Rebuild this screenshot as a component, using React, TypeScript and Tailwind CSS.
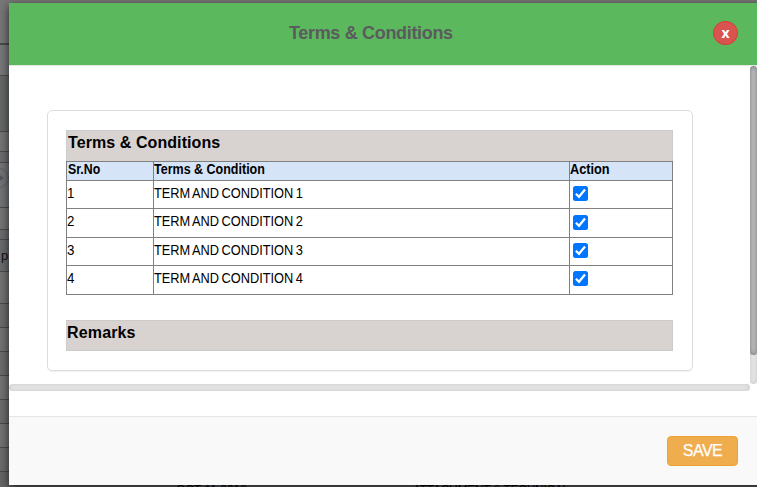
const terms = [
  { id: 1, label: 'TERM AND CONDITION 1', row: 'h-[28px]', check: 'pt-[5px]' },
  { id: 2, label: 'TERM AND CONDITION 2', row: 'h-[29px]', check: 'pt-[6px]' },
  { id: 3, label: 'TERM AND CONDITION 3', row: 'h-[28px]', check: 'pt-[5px]' },
  { id: 4, label: 'TERM AND CONDITION 4', row: 'h-[29px]', check: 'pt-[5px]' },
];

const pageRows = [
  'h-[45px] bg-[#777] border-b-2',
  'h-[31px] bg-[#77787a] border-b',
  'h-[56px] bg-[#666768] border-b',
  'h-[20px] bg-[#747474] border-b',
  'h-[11px] bg-[#6b6b6d] border-b',
  'h-[45px] bg-[#727375] border-b',
  'h-[22px] bg-[#747474] border-b',
  'h-[10px] bg-[#6a6b6d] border-b',
  'h-[32px] bg-[#696a6c] border-b',
  'h-[32px] bg-[#727272] border-b',
  'h-[24px] bg-[#6b6b6b] border-b',
  'h-[24px] bg-[#727272] border-b',
  'h-[24px] bg-[#6b6b6b] border-b',
  'h-[24px] bg-[#727272] border-b',
  'h-[24px] bg-[#6b6b6b] border-b',
  'h-[24px] bg-[#727272] border-b',
  'h-[24px] bg-[#6b6b6b] border-b',
];

function Check() {
  return (
    <span className="relative block size-[15px]">
      <input
        type="checkbox"
        defaultChecked
        className="block size-[15px] appearance-none rounded-[2.5px] bg-[#0075ff]"
      />
      <svg viewBox="0 0 15 15" className="pointer-events-none absolute inset-0 size-[15px]">
        <path d="M2.9 7.8 6 10.8 12 3.5" fill="none" stroke="#fff" strokeWidth="2.2" />
      </svg>
    </span>
  );
}

function PageBehind() {
  return (
    <div className="flex h-full flex-col bg-[#666]">
      {pageRows.map((row, i) => (
        <div key={i} className={`relative shrink-0 border-[#4b4b4c] ${row}`}>
          {i === 5 && (
            <span className="absolute -left-[11px] top-[5px] flex size-[20px] items-center justify-end rounded-full border border-[#606162] pr-[4px]">
              <span className="border-y-[3px] border-l-[4px] border-y-transparent border-l-[#56575a]" />
            </span>
          )}
          {i === 8 && (
            <span className="absolute left-[1px] top-[8px] text-[13px] leading-[16px] text-[#111]">p</span>
          )}
        </div>
      ))}
      <div className="flex shrink-0 overflow-hidden pt-[10px] text-[12px] leading-[16px] text-black">
        <span className="ml-[176px] w-[237px]">OCT 11 2018</span>
        <span className="whitespace-nowrap tracking-[-0.3px]">ATTACHMENT &amp; TECHNICAL</span>
      </div>
    </div>
  );
}

export default function App() {
  return (
    <div className="relative h-[487px] w-[757px] overflow-hidden font-['Liberation_Sans',Arial,sans-serif] text-black">
      <PageBehind />
      <div className="absolute left-[9px] top-[3px] flex h-[482px] w-[760px] flex-col bg-white shadow-[0_3px_9px_rgba(0,0,0,0.7)]">
        <header className="flex h-[63px] shrink-0 border-b border-[#e5e5e5] bg-[#5cb85c]">
          <h1 className="ml-[280px] w-[424px] pt-[18px] text-[18px] font-bold leading-[24px] tracking-[-0.33px] text-[#5b5b5f]">
            Terms &amp; Conditions
          </h1>
          <button className="mt-[18px] flex h-[24px] w-[25px] items-center justify-center rounded-full border border-[#d43f3a] bg-[#d9534f] font-['Open_Sans',sans-serif] text-[14px] font-bold leading-none text-white">
            x
          </button>
        </header>

        <main className="flex h-[350px] shrink-0">
          <div className="flex w-[741px] shrink-0 flex-col">
            <section className="ml-[38px] mt-[44px] h-[261px] w-[646px] rounded-[5px] border border-[#ddd] px-[18px] pt-[19px] shadow-[0_1px_1px_rgba(0,0,0,0.06)]">
              <h2 className="h-[31px] w-[607px] border border-b-0 border-[#ccc] bg-[#d8d2d1] pl-[1px] pt-[2px] text-[16px] font-bold leading-[20px] tracking-[0.08px]">
                Terms &amp; Conditions
              </h2>
              <div className="w-[607px] border border-[#808080] text-[14px]">
                <div className="grid h-[18px] grid-cols-[87px_416px_102px] bg-[#d6e4f7] font-bold leading-[14px]">
                  <span className="border-r border-[#808080] pl-[1px]">
                    <span className="inline-block origin-left scale-x-[0.88]">Sr.No</span>
                  </span>
                  <span className="border-r border-[#808080]">
                    <span className="inline-block origin-left scale-x-[0.893]">Terms &amp; Condition</span>
                  </span>
                  <span>
                    <span className="inline-block origin-left scale-x-[0.91]">Action</span>
                  </span>
                </div>
                {terms.map((term) => (
                  <div
                    key={term.id}
                    className={`grid grid-cols-[87px_416px_102px] border-t border-[#808080] leading-[25px] ${term.row}`}
                  >
                    <span className="border-r border-[#808080]">
                      <span className="inline-block origin-left scale-x-[0.95]">{term.id}</span>
                    </span>
                    <span className="border-r border-[#808080]">
                      <span className="inline-block origin-left scale-x-[0.914] [word-spacing:-1.2px]">{term.label}</span>
                    </span>
                    <span className={`pl-[3px] ${term.check}`}>
                      <Check />
                    </span>
                  </div>
                ))}
              </div>
              <h2 className="mt-[25px] h-[31px] w-[607px] border border-[#ccc] bg-[#d8d2d1] pt-[2px] text-[16px] font-bold leading-[20px] tracking-[0.15px]">
                Remarks
              </h2>
            </section>
            <div className="mt-[13px] h-[7px] rounded-[4px] bg-[#e5e5e5] shadow-[inset_0_0_4px_rgba(0,0,0,0.13)]" />
          </div>
          <div className="h-[318px] w-[7px] rounded-[4px] bg-[#e5e5e5] shadow-[inset_0_0_4px_rgba(0,0,0,0.13)]">
            <div className="h-[289px] rounded-[4px] bg-[#c0c0c0] shadow-[inset_0_0_5px_rgba(0,0,0,0.42)]" />
          </div>
        </main>

        <footer className="flex grow border-t border-[#e5e5e5] bg-[#f9f9f9] pl-[658px] pt-[19px]">
          <button className="h-[30px] w-[71px] rounded-[4px] border border-[#eea236] bg-[#f0ad4e] text-[16px] leading-[28px] tracking-[-0.5px] text-white [-webkit-text-stroke:0.25px_white]">
            SAVE
          </button>
        </footer>
      </div>
    </div>
  );
}
